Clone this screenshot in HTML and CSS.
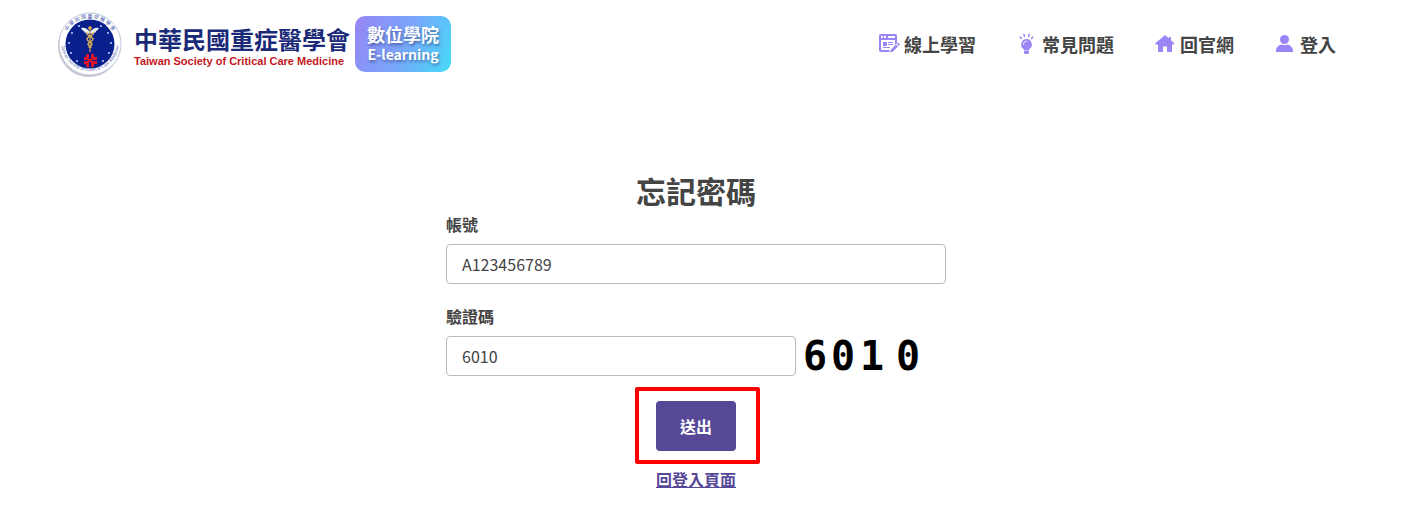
FILE: index.html
```html
<!DOCTYPE html>
<html lang="zh-Hant">
<head>
    <meta charset="UTF-8">
    <meta name="viewport" content="width=device-width, initial-scale=1.0">
    <title>忘記密碼</title>
    <link rel="stylesheet" href="styles.css">
</head>
<body>

    <header class="header">
        <!-- Logo -->
        <a class="logo" href="#">
            <svg class="seal" viewBox="0 0 66 66" aria-hidden="true">
                <circle class="seal-shadow" cx="33" cy="34" r="31"/>
                <circle class="seal-ring" cx="34" cy="32" r="31"/>
                <circle class="seal-disc" cx="34" cy="32" r="24.500"/>
                <path id="arcTop" fill="none" d="M8 32a26 26 0 0 1 52 0"/>
                <path id="arcBottom" fill="none" d="M5 30a29 29 0 0 0 58 0"/>
                <text class="seal-zh"><textPath href="#arcTop" startOffset="50%">中 華 民 國 重 症 醫 學 會</textPath></text>
                <text class="seal-en"><textPath href="#arcBottom" startOffset="50%">Taiwan Society of Critical Care Medicine</textPath></text>
                <g fill="#c5d2ff">
                    <circle cx="23" cy="14" r="1"/>
                    <circle cx="45" cy="14" r="1"/>
                    <circle cx="16" cy="21" r="1"/>
                    <circle cx="52" cy="21" r="1"/>
                    <circle cx="13" cy="31" r="1"/>
                    <circle cx="55" cy="31" r="1"/>
                    <circle cx="15" cy="41" r="1"/>
                    <circle cx="53" cy="41" r="1"/>
                    <circle cx="21" cy="49" r="1"/>
                    <circle cx="47" cy="49" r="1"/>
                </g>
                <path fill="#e9eef5" d="M34 20C31 16 28 15 25 16c1 2 2 3 3 3 0 1 1 2 2 2 1 1 3 1 4 0 1 1 3 1 4 0 1 0 2-1 2-2 1 0 2-1 3-3-3-1-6 0-9 4z"/>
                <circle cx="34" cy="16" r="1.800" fill="#e8b54a"/>
                <path fill="none" stroke="#d9a441" stroke-width="1.200" d="M34 17v23"/>
                <path fill="none" stroke="#e3b75c" stroke-width="1.300" d="M31 20c-3 3 6 4 6 7s-5 2-5 5 3 2 3 4M37 20c3 3-6 4-6 7s5 2 5 5-3 2-3 4"/>
                <path fill="#e0132c" d="M30 42h3v5h-3zM35 42h3v5h-3zM30 50h3v5h-3zM35 50h3v5h-3zM28 45h5v3h-5zM35 45h6v3h-6zM28 49h5v3h-5zM35 49h6v3h-6zM32 47h4v3h-4z"/>
            </svg>
            <span class="society">
                <span class="society-zh">中華民國重症醫學會</span>
                <span class="society-en">Taiwan Society of Critical Care Medicine</span>
            </span>
            <span class="badge">
                <span class="badge-zh">數位學院</span>
                <span class="badge-en">E-learning</span>
            </span>
        </a>

        <!-- Navigation -->
        <nav class="nav">
            <a href="#">
                <svg class="icon" viewBox="0 0 20 20" aria-hidden="true">
                    <path fill-rule="evenodd" d="M3 0h14a2 2 0 0 1 2 2v7l-2 2V6H3v9a1 1 0 0 0 1 1h8l-1 2H3a2 2 0 0 1-2-2V2a2 2 0 0 1 2-2zM3 2v2h2V2zM6 2v2h2V2zM10 2v2h7V2z"/>
                    <path d="M5 8h4v4H5zM10 8h5v1h-5zM10 10h5v1h-5zM5 13h7v1H5z"/>
                    <path d="M20 8.500l2 2-1.300 1.300-2-2zM18 10.500l2 2-5 5-3 1 1-3z"/>
                </svg>
                線上學習
            </a>
            <a href="#">
                <svg class="icon" viewBox="0 0 20 20" aria-hidden="true">
                    <path d="M10.500 5a5.500 5.500 0 0 1 3 10c-.5.400-.5.900-.5 1.400H8c0-.5 0-1-.5-1.400a5.500 5.500 0 0 1 3-10zM8 17h5v2l-1 1H9l-1-1z"/>
                    <path fill="none" stroke="#9b84f5" stroke-width="1.500" stroke-linecap="round" d="M8.500 2.500L8 .5M12.500 2.500l.5-2M5.500 4.500L4.200 3M15.500 4.500L16.800 3"/>
                    <path fill="none" stroke="#fff" stroke-width="1" stroke-linecap="round" d="M7.500 10.200c0-1.700 1.200-3 2.800-3"/>
                </svg>
                常見問題
            </a>
            <a href="#">
                <svg class="icon" viewBox="0 0 20 20" aria-hidden="true">
                    <path d="M10.500 1.500a1 1 0 0 1 1.200 0l3.300 3V3h2v3.300l3 2.700c.6.600.3 1.500-.5 1.500H18V17a1 1 0 0 1-1 1h-4v-5.500H9V18H5a1 1 0 0 1-1-1v-6.500H2c-.8 0-1.100-.9-.5-1.500z"/>
                </svg>
                回官網
            </a>
            <a href="#">
                <svg class="icon" viewBox="0 0 20 20" aria-hidden="true">
                    <circle cx="10.500" cy="5.500" r="4.500"/>
                    <path d="M2 18v-1c0-3.500 2.500-6 6-6.500 1.500 1 3.500 1 5 0 3.500.5 6 3 6 6.500v1z"/>
                </svg>
                登入
            </a>
        </nav>
    </header>

    <main class="main">
        <!-- Forgot password form -->
        <form class="form">
            <h1>忘記密碼</h1>
            <div class="input-group">
                <label for="account">帳號</label>
                <input type="text" id="account" value="A123456789">
            </div>
            <div class="input-group">
                <label for="captcha">驗證碼</label>
                <div class="captcha-row">
                    <input type="text" id="captcha" value="6010">
                    <svg class="captcha" viewBox="0 0 150 40" role="img" aria-label="驗證碼">
                        <text x="7 35 64 100" y="34">6010</text>
                    </svg>
                </div>
            </div>
            <div class="button-group">
                <div class="highlight">
                    <button type="button">送出</button>
                </div>
                <a class="back-link" href="#">回登入頁面</a>
            </div>
        </form>
    </main>

</body>
</html>
```
FILE: styles.css
```css
* {
    box-sizing: border-box;
}
body {
    margin: 0;
    padding-right: 15px;
    font-family: "Noto Sans CJK TC", sans-serif;
    font-size: 16px;
    line-height: 24px;
    color: #444;
    background-color: #fff;
}
.header {
    display: flex;
    justify-content: space-between;
    align-items: center;
    padding: 12px 56px;
}
.logo {
    display: flex;
    align-items: center;
    text-decoration: none;
}
.seal {
    width: 66px;
    height: 66px;
    margin-right: 12px;
}
.seal-shadow {
    fill: #c4c6cc;
}
.seal-ring {
    fill: #fff;
    stroke: #c3c9df;
    stroke-width: 1px;
}
.seal-disc {
    fill: #081f8c;
}
.seal-zh,
.seal-en {
    fill: #4a5cae;
    text-anchor: middle;
}
.seal-zh {
    font-size: 5px;
}
.seal-en {
    font-family: "Liberation Serif", serif;
    font-size: 5px;
}
.society {
    display: flex;
    flex-direction: column;
    margin-right: 5px;
    padding-top: 3px;
}
.society-zh {
    font-size: 24px;
    font-weight: bold;
    line-height: 28px;
    color: #1b2a78;
}
.society-en {
    font-family: "Liberation Sans", Arial, sans-serif;
    font-size: 11px;
    font-weight: bold;
    line-height: 16px;
    color: #c4161c;
}
.badge {
    display: flex;
    flex-direction: column;
    justify-content: center;
    align-items: center;
    width: 96px;
    height: 56px;
    margin-bottom: 2px;
    border-radius: 10px;
    background: linear-gradient(115deg, #9785f5, #7aa5fa 50%, #45dcf8);
    color: #fff;
    font-weight: bold;
    text-shadow: 1px 2px 3px rgba(40, 60, 120, 0.6);
}
.badge-zh {
    font-size: 18px;
    line-height: 20px;
}
.badge-en {
    font-size: 14px;
    line-height: 20px;
}
.nav {
    display: flex;
    gap: 40px;
    padding-bottom: 2px;
}
.nav a {
    display: flex;
    align-items: center;
    gap: 6px;
    color: #444;
    font-size: 18px;
    font-weight: bold;
    text-decoration: none;
}
.icon {
    width: 20px;
    height: 20px;
    fill: #9b84f5;
    overflow: visible;
}
.main {
    padding-top: 82px;
}
.form {
    max-width: 500px;
    margin: 0 auto;
}
h1 {
    margin: 0 0 4px;
    font-size: 30px;
    line-height: 36px;
    text-align: center;
}
.input-group {
    margin-bottom: 20px;
}
.input-group label {
    display: block;
    margin-bottom: 8px;
    font-weight: bold;
}
.input-group input {
    width: 100%;
    height: 40px;
    padding: 0 15px;
    border: 1px solid #bbb;
    border-radius: 4px;
    font-family: inherit;
    font-size: 16px;
    color: #444;
}
.captcha-row {
    display: flex;
}
.captcha-row input {
    width: 70%;
}
.captcha {
    width: 30%;
    height: 40px;
    font-family: "DejaVu Sans Mono", monospace;
    font-size: 40px;
    font-weight: bold;
    fill: #000;
}
.button-group {
    display: flex;
    flex-direction: column;
    align-items: center;
    gap: 16px;
    padding-top: 5px;
}
.highlight {
    position: relative;
}
/* Red frame around the submit button */
.highlight::after {
    content: "";
    position: absolute;
    inset: -14px -24px -13px -21px;
    border: 4px solid #f00;
    border-radius: 2px;
    pointer-events: none;
}
button {
    display: block;
    padding: 13px 24px;
    border: none;
    border-radius: 4px;
    background-color: #574797;
    color: #fff;
    font-family: inherit;
    font-size: 16px;
    font-weight: bold;
    line-height: 24px;
    cursor: pointer;
}
.back-link {
    color: #574797;
    font-weight: bold;
}
```
